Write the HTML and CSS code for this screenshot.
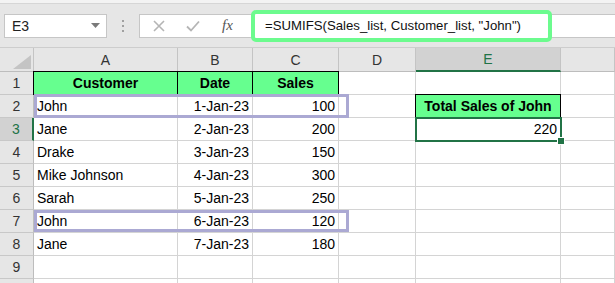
FILE: index.html
```html
<!DOCTYPE html>
<html lang="en">
<head>
  <meta charset="UTF-8">
  <title>SUMIFS example</title>
  <link rel="stylesheet" href="styles.css">
</head>
<body>
  <div class="ribbon-edge"></div>
  <div class="toolbar">
    <div class="name-box">
      <span>E3</span>
      <svg class="caret" width="9" height="5" viewBox="0 0 9 5"><polygon points="0,0 9,0 4.5,5" fill="#7a7a7a"/></svg>
    </div>
    <div class="dots"><i></i><i></i><i></i></div>
    <div class="fx-buttons">
      <svg width="12" height="12" viewBox="0 0 12 12"><path d="M1 1 L11 11 M11 1 L1 11" stroke="#b5b5b5" stroke-width="1.6"/></svg>
      <svg width="14" height="12" viewBox="0 0 14 12"><path d="M1 6.5 L5 10.5 L13 1.5" stroke="#b5b5b5" stroke-width="1.8" fill="none"/></svg>
      <span class="fx">fx</span>
    </div>
    <div class="formula-bar">
      <div class="formula-hl">=SUMIFS(Sales_list, Customer_list, "John")</div>
    </div>
  </div>

  <div class="sheet">
    <div class="grid">
      <div class="corner">
        <svg width="18" height="14" viewBox="0 0 18 14"><polygon points="18,0 18,14 0,14" fill="#c4c4c4"/></svg>
      </div>
      <div class="colh">A</div>
      <div class="colh">B</div>
      <div class="colh">C</div>
      <div class="colh">D</div>
      <div class="colh active">E</div>
      <div class="colh"></div>

      <div class="rowh">1</div>
      <div class="cell head first">Customer</div>
      <div class="cell head">Date</div>
      <div class="cell head">Sales</div>
      <div class="cell"></div>
      <div class="cell"></div>
      <div class="cell"></div>

      <div class="rowh">2</div>
      <div class="cell">John</div>
      <div class="cell num">1-Jan-23</div>
      <div class="cell num">100</div>
      <div class="cell"></div>
      <div class="cell head first">Total Sales of John</div>
      <div class="cell"></div>

      <div class="rowh active">3</div>
      <div class="cell">Jane</div>
      <div class="cell num">2-Jan-23</div>
      <div class="cell num">200</div>
      <div class="cell"></div>
      <div class="cell num">220</div>
      <div class="cell"></div>

      <div class="rowh">4</div>
      <div class="cell">Drake</div>
      <div class="cell num">3-Jan-23</div>
      <div class="cell num">150</div>
      <div class="cell"></div>
      <div class="cell"></div>
      <div class="cell"></div>

      <div class="rowh">5</div>
      <div class="cell">Mike Johnson</div>
      <div class="cell num">4-Jan-23</div>
      <div class="cell num">300</div>
      <div class="cell"></div>
      <div class="cell"></div>
      <div class="cell"></div>

      <div class="rowh">6</div>
      <div class="cell">Sarah</div>
      <div class="cell num">5-Jan-23</div>
      <div class="cell num">250</div>
      <div class="cell"></div>
      <div class="cell"></div>
      <div class="cell"></div>

      <div class="rowh">7</div>
      <div class="cell">John</div>
      <div class="cell num">6-Jan-23</div>
      <div class="cell num">120</div>
      <div class="cell"></div>
      <div class="cell"></div>
      <div class="cell"></div>

      <div class="rowh">8</div>
      <div class="cell">Jane</div>
      <div class="cell num">7-Jan-23</div>
      <div class="cell num">180</div>
      <div class="cell"></div>
      <div class="cell"></div>
      <div class="cell"></div>

      <div class="rowh">9</div>
      <div class="cell"></div>
      <div class="cell"></div>
      <div class="cell"></div>
      <div class="cell"></div>
      <div class="cell"></div>
      <div class="cell"></div>

      <div class="rowh"></div>
      <div class="cell"></div>
      <div class="cell"></div>
      <div class="cell"></div>
      <div class="cell"></div>
      <div class="cell"></div>
      <div class="cell"></div>
    </div>

    <div class="match match-2"></div>
    <div class="match match-7"></div>
    <div class="selection"><span class="handle"></span></div>
  </div>
</body>
</html>
```

FILE: styles.css
```css
body {
  margin: 0;
  font-family: "Liberation Sans", Arial, sans-serif;
  background: #fff;
  overflow: hidden;
}
.ribbon-edge {
  height: 3px;
  background: #f3f3f3;
  border-bottom: 1px solid #d6d6d6;
}
.toolbar {
  height: 43px;
  background: #e6e6e6;
  border-bottom: 1px solid #cdcdcd;
  display: flex;
  align-items: center;
}
.name-box {
  margin-left: 4px;
  width: 103px;
  height: 24px;
  box-sizing: border-box;
  background: #fff;
  border: 1px solid #c6c6c6;
  display: flex;
  align-items: center;
  justify-content: space-between;
  padding: 0 6px 0 7px;
  font-size: 14px;
  color: #222;
}
.dots {
  width: 32px;
  display: flex;
  flex-direction: column;
  align-items: center;
  gap: 3px;
}
.dots i {
  width: 2px;
  height: 2px;
  background: #a0a0a0;
}
.fx-buttons {
  width: 116px;
  height: 24px;
  box-sizing: border-box;
  background: #fff;
  border: 1px solid #c6c6c6;
  display: flex;
  align-items: center;
  gap: 21px;
  padding-left: 13px;
}
.fx {
  font-family: "Liberation Serif", serif;
  font-style: italic;
  font-size: 15px;
  color: #555;
  margin-left: 1px;
}
.formula-bar {
  flex: 1;
  height: 24px;
  box-sizing: border-box;
  margin-left: -4px;
  background: #fff;
  border-top: 1px solid #c6c6c6;
  border-bottom: 1px solid #c6c6c6;
  display: flex;
  align-items: center;
}
.formula-hl {
  flex: none;
  width: 301px;
  height: 32px;
  box-sizing: border-box;
  border: 4px solid #6cfb8e;
  border-radius: 5px;
  background: #fff;
  padding-left: 10px;
  display: flex;
  align-items: center;
  font-size: 13.2px;
  color: #111;
}

.sheet {
  position: relative;
  height: 235px;
  overflow: hidden;
}
.grid {
  display: grid;
  grid-template-columns: 34px 144px 75px 86px 77px 145px 54px;
  grid-template-rows: 24px repeat(10, 23px);
}
.grid > div {
  box-sizing: border-box;
  border-right: 1px solid #d4d4d4;
  border-bottom: 1px solid #d4d4d4;
}
.corner {
  background: #e6e6e6;
  display: flex;
  align-items: flex-end;
  justify-content: flex-end;
  padding: 0 2px 2px 0;
}
.grid > .corner,
.grid > .colh {
  border-right-color: #c4c4c4;
  border-bottom-color: #bdbdbd;
}
.colh {
  background: #e6e6e6;
  font-size: 14px;
  color: #333;
  display: flex;
  align-items: center;
  justify-content: center;
}
.grid > .colh.active {
  background: #d2d2d2;
  color: #217346;
  border-bottom: 2px solid #217346;
}
.grid > .rowh {
  background: #e6e6e6;
  border-right-color: #bdbdbd;
  border-bottom-color: #c8c8c8;
  font-size: 14px;
  color: #333;
  display: flex;
  align-items: center;
  justify-content: center;
}
.grid > .rowh.active {
  background: #d2d2d2;
  color: #217346;
  border-right: 2px solid #217346;
}
.cell {
  font-size: 14px;
  color: #000;
  padding: 0 3px;
  display: flex;
  align-items: center;
  white-space: nowrap;
}
.num {
  justify-content: flex-end;
}
.grid > .head {
  background: #66ff8f;
  font-weight: bold;
  justify-content: center;
  border-right-color: #000;
  border-bottom-color: #000;
  box-shadow: 0 -1px 0 #000;
}
.grid > .head.first {
  box-shadow: 0 -1px 0 #000, -1px 0 0 #000, -1px -1px 0 #000;
}

.match {
  position: absolute;
  left: 34px;
  width: 315px;
  box-sizing: border-box;
  border: 3px solid #aba9d3;
}
.match-2 {
  top: 46px;
  height: 24px;
}
.match-7 {
  top: 162px;
  height: 22px;
}
.selection {
  position: absolute;
  left: 415px;
  top: 69px;
  width: 147px;
  height: 25px;
  box-sizing: border-box;
  border: 2px solid #217346;
}
.handle {
  position: absolute;
  right: -5px;
  bottom: -5px;
  width: 6px;
  height: 6px;
  background: #217346;
  border: 1px solid #fff;
}
```
